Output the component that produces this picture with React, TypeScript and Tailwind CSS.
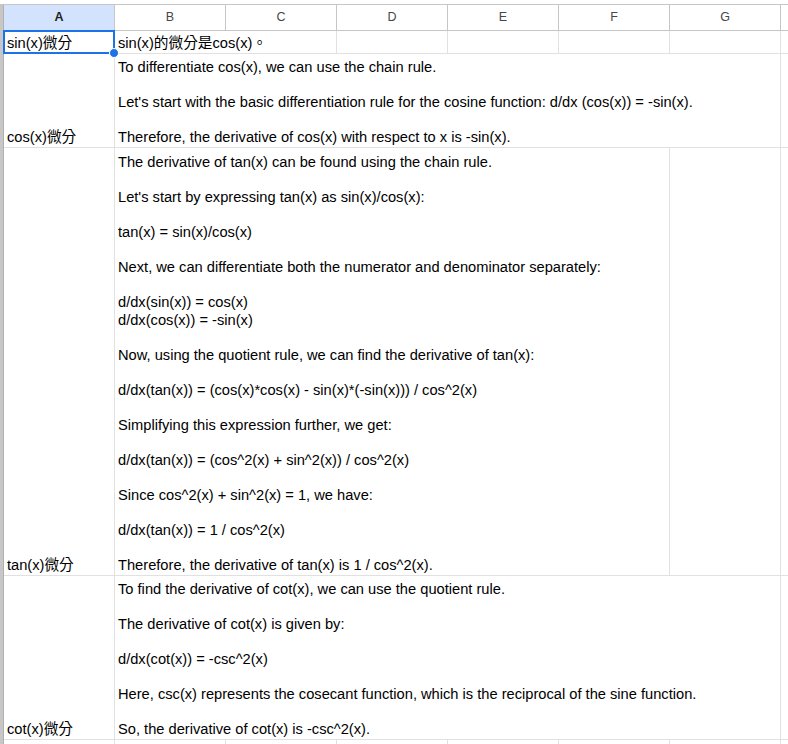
import React from 'react';

const cols = ['A', 'B', 'C', 'D', 'E', 'F', 'G', 'H'];

const rows = [
  {
    a: 'cos(x)微分',
    b: "To differentiate cos(x), we can use the chain rule.\n\nLet's start with the basic differentiation rule for the cosine function: d/dx (cos(x)) = -sin(x).\n\nTherefore, the derivative of cos(x) with respect to x is -sin(x).",
    span: 6,
    h: 'h-[94px]',
  },
  {
    a: 'tan(x)微分',
    b: "The derivative of tan(x) can be found using the chain rule.\n\nLet's start by expressing tan(x) as sin(x)/cos(x):\n\ntan(x) = sin(x)/cos(x)\n\nNext, we can differentiate both the numerator and denominator separately:\n\nd/dx(sin(x)) = cos(x)\nd/dx(cos(x)) = -sin(x)\n\nNow, using the quotient rule, we can find the derivative of tan(x):\n\nd/dx(tan(x)) = (cos(x)*cos(x) - sin(x)*(-sin(x))) / cos^2(x)\n\nSimplifying this expression further, we get:\n\nd/dx(tan(x)) = (cos^2(x) + sin^2(x)) / cos^2(x)\n\nSince cos^2(x) + sin^2(x) = 1, we have:\n\nd/dx(tan(x)) = 1 / cos^2(x)\n\nTherefore, the derivative of tan(x) is 1 / cos^2(x).",
    span: 5,
    h: 'h-[428px]',
  },
  {
    a: 'cot(x)微分',
    b: 'To find the derivative of cot(x), we can use the quotient rule.\n\nThe derivative of cot(x) is given by:\n\nd/dx(cot(x)) = -csc^2(x)\n\nHere, csc(x) represents the cosecant function, which is the reciprocal of the sine function.\n\nSo, the derivative of cot(x) is -csc^2(x).',
    span: 6,
    h: 'h-[164px]',
  },
];

const font = "font-['Liberation_Sans','Noto_Sans_CJK_TC',sans-serif]";
const base = 'border-b border-[#e1e1e1] flex items-end px-[3px] pb-[1px] leading-[17.5px] text-[14.67px] text-black';
const cell = `${base} border-r whitespace-pre-wrap`;

export default function App() {
  return (
    <div className={`w-[788px] h-[744px] overflow-hidden bg-white pt-1 ${font}`}>
      <div className="border-t border-[#c4c7c5] flex">
        {/* left row-header strip */}
        <div className="w-[4px] shrink-0 bg-[#c7c7c7] border-r border-[#b0b0b0]" />
        <div className="grid grid-cols-[111px_111px_111px_111px_111px_111px_111px_111px]">
          {cols.map((c, i) => (
            <div
              key={c}
              className={`h-[26px] flex items-center justify-center border-r border-b border-[#c4c7c5] text-[12.5px] ${
                i === 0 ? 'bg-[#d3e3fd] font-bold text-[#1f1f1f]' : 'bg-white text-[#444746]'
              }`}
            >
              {c}
            </div>
          ))}

          {/* row 1 */}
          <div className={`${cell} h-[23px] relative`}>
            <span>sin(x)微分</span>
            <div className="absolute -left-px -top-px w-[112px] h-[24px] border-2 border-[#1a73e8] pointer-events-none" />
            <div className="absolute -right-[5px] -bottom-[5px] w-[10px] h-[10px] rounded-full bg-[#1a73e8] border border-white z-10" />
          </div>
          <div className={`${base} h-[23px] overflow-visible`}>
            <span className="whitespace-nowrap shrink-0">sin(x)的微分是cos(x)。</span>
          </div>
          {cols.slice(2).map((c) => (
            <div key={c} className={`${cell} h-[23px]`} />
          ))}

          {rows.map((r, i) => (
            <React.Fragment key={i}>
              <div className={`${cell} ${r.h}`}>{r.a}</div>
              <div className={`${cell} ${r.h} ${r.span === 6 ? 'col-span-6' : 'col-span-5'}`}>{r.b}</div>
              {r.span === 5 && <div className={`${cell} ${r.h}`} />}
              <div className={`${cell} ${r.h}`} />
            </React.Fragment>
          ))}

          {cols.map((c) => (
            <div key={c} className={`${cell} h-[23px]`} />
          ))}
        </div>
      </div>
    </div>
  );
}
